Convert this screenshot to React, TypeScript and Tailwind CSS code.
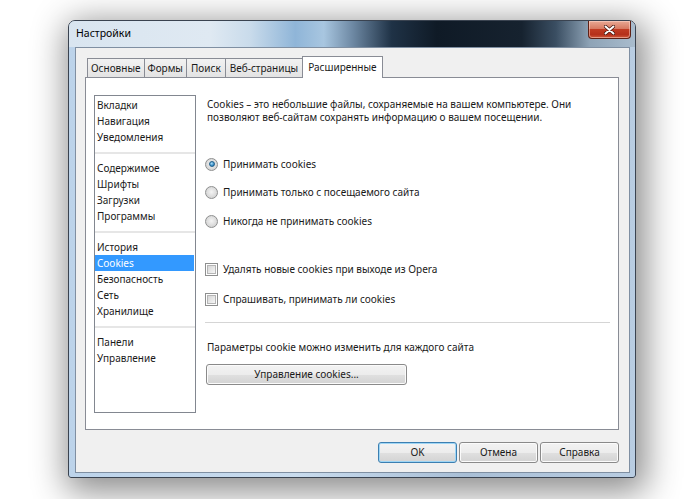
import React from "react";

const F = "font-['Noto_Sans',sans-serif]";

function Radio({ checked }: { checked?: boolean }) {
  return (
    <span className="flex h-[13px] w-[13px] shrink-0 items-center justify-center rounded-full border border-[#8e8f8f] bg-[radial-gradient(circle_at_50%_45%,#f4f4f4_0%,#dadada_60%,#c9c9c9_100%)]">
      {checked && (
        <span className="h-[6px] w-[6px] rounded-full border border-[#1f5f8a] bg-[radial-gradient(circle_at_40%_35%,#a8dcf7_0%,#2d86c2_70%,#1b5a86_100%)]" />
      )}
    </span>
  );
}

function Check() {
  return (
    <span className="flex h-[13px] w-[13px] shrink-0 items-center justify-center border border-[#8e8f8f] bg-white">
      <span className="h-[9px] w-[9px] border border-[#b5b5b5] bg-[linear-gradient(135deg,#d6d6d6,#f6f6f6)]" />
    </span>
  );
}

function Btn({
  children,
  focus,
  className = "",
}: {
  children: React.ReactNode;
  focus?: boolean;
  className?: string;
}) {
  return (
    <div
      className={`flex items-center justify-center rounded-[3px] border ${
        focus
          ? "border-[#3c7fb1] shadow-[inset_0_0_0_1px_#9fd6f5]"
          : "border-[#8a8a8a] shadow-[inset_0_0_0_1px_#fbfbfb]"
      } bg-[linear-gradient(#f3f3f3_0%,#ececec_50%,#e0e0e0_50%,#d3d3d3_100%)] text-[10px] text-[#1a1a1a] ${className}`}
    >
      {children}
    </div>
  );
}

const groups: string[][] = [
  ["Вкладки", "Навигация", "Уведомления"],
  ["Содержимое", "Шрифты", "Загрузки", "Программы"],
  ["История", "Cookies", "Безопасность", "Сеть", "Хранилище"],
  ["Панели", "Управление"],
];

const tabs: { t: string; pad: string }[] = [
  { t: "Основные", pad: "px-[3px]" },
  { t: "Формы", pad: "px-[3px]" },
  { t: "Поиск", pad: "px-[4px]" },
  { t: "Веб-страницы", pad: "px-[4px]" },
];

export default function App() {
  return (
    <div className={`${F} h-[499px] w-[699px] overflow-hidden bg-white pl-[68px] pt-[20px]`}>
      <div className="flex h-[458px] w-[568px] flex-col rounded-t-[7px] rounded-b-[3px] border border-[#3a4350] bg-[linear-gradient(90deg,#bcd3ea_0%,#c9dcee_40%,#a9bfd6_70%,#b9cde2_100%)] shadow-[4px_8px_34px_6px_rgba(0,0,0,0.45)]">
        {/* title bar */}
        <div className="flex h-[26px] shrink-0 items-start justify-between rounded-t-[6px] bg-[linear-gradient(90deg,#d9e5f0_0%,#dfe9f2_25%,#c9dbeb_32%,#8fb5d8_40%,#a8c6e0_45%,#6f8aa5_50%,#1f3246_57%,#0f1a26_65%,#16222f_80%,#3a4e62_86%,#8ea3b6_92%,#a9bccd_100%)] pl-[7px] pr-[4px]">
          <div className="flex h-[26px] items-center text-[10.5px] text-black">Настройки</div>
          <div className="flex h-[18px] w-[43px] items-center justify-center rounded-b-[4px] border border-t-0 border-[#5e2116] bg-[linear-gradient(#e9a994_0%,#d77a62_45%,#c03b22_50%,#b5301a_80%,#d05a3c_100%)] shadow-[inset_0_0_0_1px_rgba(255,220,210,0.5)]">
            <svg width="11" height="10" viewBox="0 0 11 10">
              <path d="M1.5 1.5 L9.5 8.5 M9.5 1.5 L1.5 8.5" stroke="#3b1008" strokeWidth="3.4" strokeLinecap="round" />
              <path d="M1.5 1.5 L9.5 8.5 M9.5 1.5 L1.5 8.5" stroke="#ffffff" strokeWidth="2" strokeLinecap="round" />
            </svg>
          </div>
        </div>

        {/* client area */}
        <div className="mb-[4px] ml-[6px] mr-[5px] flex flex-1 flex-col border border-[#7f8fa2] bg-[#f0f0f0]">
          {/* tabs */}
          <div className="ml-[11px] mt-[8px] flex h-[21px] items-end">
            {tabs.map(({ t, pad }) => (
              <div
                key={t}
                className={`-mr-px flex h-[19px] items-center border border-b-0 border-[#898c95] bg-[linear-gradient(#f2f2f2,#e3e3e3)] ${pad} text-[10px] text-[#1a1a1a]`}
              >
                {t}
              </div>
            ))}
            <div className="relative z-10 -mb-px flex h-[22px] items-center border border-b-0 border-[#898c95] bg-white px-[5px] pb-px text-[10px] text-[#1a1a1a]">
              Расширенные
            </div>
          </div>

          {/* panel */}
          <div className="ml-[9px] flex h-[353px] w-[534px] items-start border border-[#898c95] bg-white">
            {/* list */}
            <div className="ml-[8px] mt-[17px] h-[318px] w-[102px] border border-[#828790] bg-white pt-[1px]">
              {groups.map((g, gi) => (
                <div key={gi}>
                  {gi > 0 && (
                    <div className="flex h-[15px] items-center">
                      <div className="h-[2px] w-full bg-[#e6e6e6]" />
                    </div>
                  )}
                  {g.map((it) => (
                    <div
                      key={it}
                      className={`flex h-[16px] items-center pl-[2px] text-[10px] ${
                        it === "Cookies" ? "mr-px bg-[#3399ff] text-white" : "text-[#1a1a1a]"
                      }`}
                    >
                      {it}
                    </div>
                  ))}
                </div>
              ))}
            </div>

            {/* content */}
            <div className="ml-[9px] mt-[20px] flex w-[406px] flex-col text-[10px] text-[#1a1a1a]">
              <div className="whitespace-nowrap pl-[2px] leading-[13px]">
                Cookies – это небольшие файлы, сохраняемые на вашем компьютере. Они
                <br />
                позволяют веб-сайтам сохранять информацию о вашем посещении.
              </div>

              <div className="mt-[32px] flex h-[16px] items-center gap-[5px]">
                <Radio checked />
                <span>Принимать cookies</span>
              </div>
              <div className="mt-[12px] flex h-[16px] items-center gap-[5px]">
                <Radio />
                <span>Принимать только с посещаемого сайта</span>
              </div>
              <div className="mt-[13px] flex h-[16px] items-center gap-[5px]">
                <Radio />
                <span>Никогда не принимать cookies</span>
              </div>

              <div className="mt-[32px] flex h-[16px] items-center gap-[5px]">
                <Check />
                <span>Удалять новые cookies при выходе из Opera</span>
              </div>
              <div className="mt-[14px] flex h-[16px] items-center gap-[5px]">
                <Check />
                <span>Спрашивать, принимать ли cookies</span>
              </div>

              <div className="mt-[15px] h-px w-[405px] bg-[#d5d5d5]" />

              <div className="mt-[16px] flex h-[16px] items-center pl-[2px]">
                Параметры cookie можно изменить для каждого сайта
              </div>
              <Btn className="ml-px mt-[9px] h-[21px] w-[201px]">Управление cookies...</Btn>
            </div>
          </div>

          {/* bottom buttons */}
          <div className="ml-[9px] mt-[12px] flex w-[534px] justify-end gap-[2px]">
            <Btn focus className="h-[21px] w-[79px]">
              OK
            </Btn>
            <Btn className="h-[21px] w-[79px]">Отмена</Btn>
            <Btn className="h-[21px] w-[79px]">Справка</Btn>
          </div>
        </div>
      </div>
    </div>
  );
}
